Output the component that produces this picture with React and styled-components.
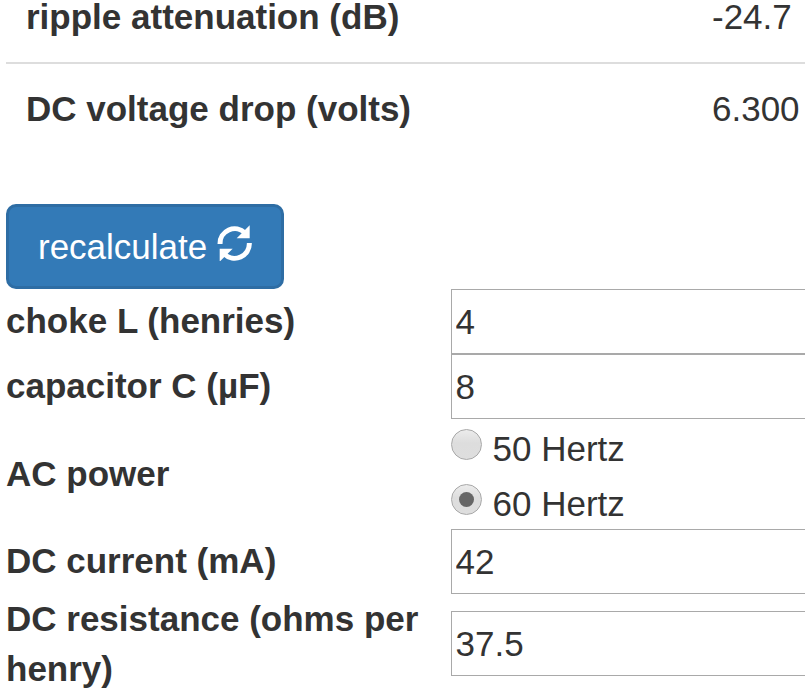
import React, { useState } from 'react'
import styled, { createGlobalStyle, css } from 'styled-components';

const GlobalStyle = createGlobalStyle`
* {
  box-sizing: border-box;
}
body {
  margin: 0;
  background: #fff;
  color: #333;
  font-family: "Liberation Sans", Arial, sans-serif;
  font-size: 35px;
  line-height: 50px;
  overflow: hidden;
}
`

const results = [
  { name: 'ripple attenuation (dB)', value: '-24.7' },
  { name: 'DC voltage drop (volts)', value: '6.300' },
]

function App() {
const [values, setValues] = useState({ choke: '4', capacitor: '8', current: '42', resistance: '37.5' })
const [hertz, setHertz] = useState('60')

const changeValue = (event) => {
  setValues({ ...values, [event.target.name]: event.target.value })
}

const changeHertz = (event) => {
  setHertz(event.target.value)
}

  return (
    <Page>
      <GlobalStyle/>
      <Results>
        {results.map((item) => (
          <ResultRow key={item.name}>
            <ResultName>{item.name}</ResultName>
            <span>{item.value}</span>
          </ResultRow>
        ))}
      </Results>

      <Button type="button">
        recalculate
        <RefreshIcon viewBox="36 30 108 108" aria-hidden="true">
          <path d="M45 87A44 44 0 0 1 120 54" />
          <path d="M133 84A44 44 0 0 1 58 117" />
          <polygon points="134,31 134,70 95,70" />
          <polygon points="44,140 44,101 83,101" />
        </RefreshIcon>
      </Button>

      <FieldRow>
        <Label htmlFor="choke">choke L (henries)</Label>
        <Input id="choke" name="choke" value={values.choke} onChange={changeValue} />
      </FieldRow>
      <FieldRow>
        <Label htmlFor="capacitor">capacitor C (µF)</Label>
        <Input id="capacitor" name="capacitor" value={values.capacitor} onChange={changeValue} />
      </FieldRow>
      <FieldRow>
        <Label as="span" $tall>AC power</Label>
        <div>
          {['50', '60'].map((item) => (
            <RadioLabel key={item}>
              <HiddenRadio type="radio" name="hertz" value={item} checked={hertz === item} onChange={changeHertz} />
              <RadioDot $checked={hertz === item} />
              {item} Hertz
            </RadioLabel>
          ))}
        </div>
      </FieldRow>
      <FieldRow>
        <Label htmlFor="current">DC current (mA)</Label>
        <Input id="current" name="current" value={values.current} onChange={changeValue} />
      </FieldRow>
      <FieldRow>
        <Label htmlFor="resistance" $tall>DC resistance (ohms per henry)</Label>
        <Input id="resistance" name="resistance" value={values.resistance} onChange={changeValue} $tall />
      </FieldRow>
    </Page>
  )
}

export default App

const Page = styled.main`
  height: 692px;
  padding-left: 6px;
  overflow: hidden;
`

const Results = styled.div`
  margin: -28px 0 50px;
`

const ResultRow = styled.div`
  display: grid;
  grid-template-columns: 686px 1fr;
  padding: 20px 0 20px 20px;

  & + & {
    border-top: 2px solid #ddd;
  }
`

const ResultName = styled.span`
  font-weight: 700;
`

const Button = styled.button`
  display: flex;
  align-items: center;
  width: 278px;
  height: 85px;
  padding: 0 0 0 29px;
  border: 3px solid #2e6da4;
  border-radius: 10px;
  background: #337ab7;
  color: #fff;
  font: inherit;
  cursor: pointer;
`

const RefreshIcon = styled.svg`
  width: 36px;
  height: 36px;
  margin: -7px 0 0 10px;

  path {
    fill: none;
    stroke: #fff;
    stroke-width: 15;
  }
  polygon {
    fill: #fff;
  }
`

const FieldRow = styled.div`
  display: grid;
  grid-template-columns: 445px 1fr;
  align-items: center;
`

const Label = styled.label`
  margin-top: ${({ $tall }) => ($tall ? '0' : '-1px')};
  padding-right: 20px;
  font-weight: 700;
`

const Input = styled.input`
  width: 440px;
  height: 65px;
  margin-top: ${({ $tall }) => ($tall ? '-1px' : '0')};
  padding: 0 3.5px;
  border: 1px solid #a9a9a9;
  border-radius: 0;
  outline: none;
  background: #fff;
  color: #333;
  font: inherit;
`

const RadioLabel = styled.label`
  display: flex;
  align-items: center;
  height: 55px;
  padding-top: 5px;
`

const HiddenRadio = styled.input`
  position: absolute;
  opacity: 0;
  pointer-events: none;
`

const RadioDot = styled.span`
  display: grid;
  place-items: center;
  width: 31px;
  height: 31px;
  margin: -9px 10.5px 0 0;
  border: 1px solid #a8a8a8;
  border-radius: 50%;
  background: linear-gradient(#ededed, #ddd 45%, #dedede) border-box;

  ${({ $checked }) => $checked && css`
    &::after {
      content: "";
      width: 15px;
      height: 15px;
      border-radius: 50%;
      background: #666;
    }
  `}
`
